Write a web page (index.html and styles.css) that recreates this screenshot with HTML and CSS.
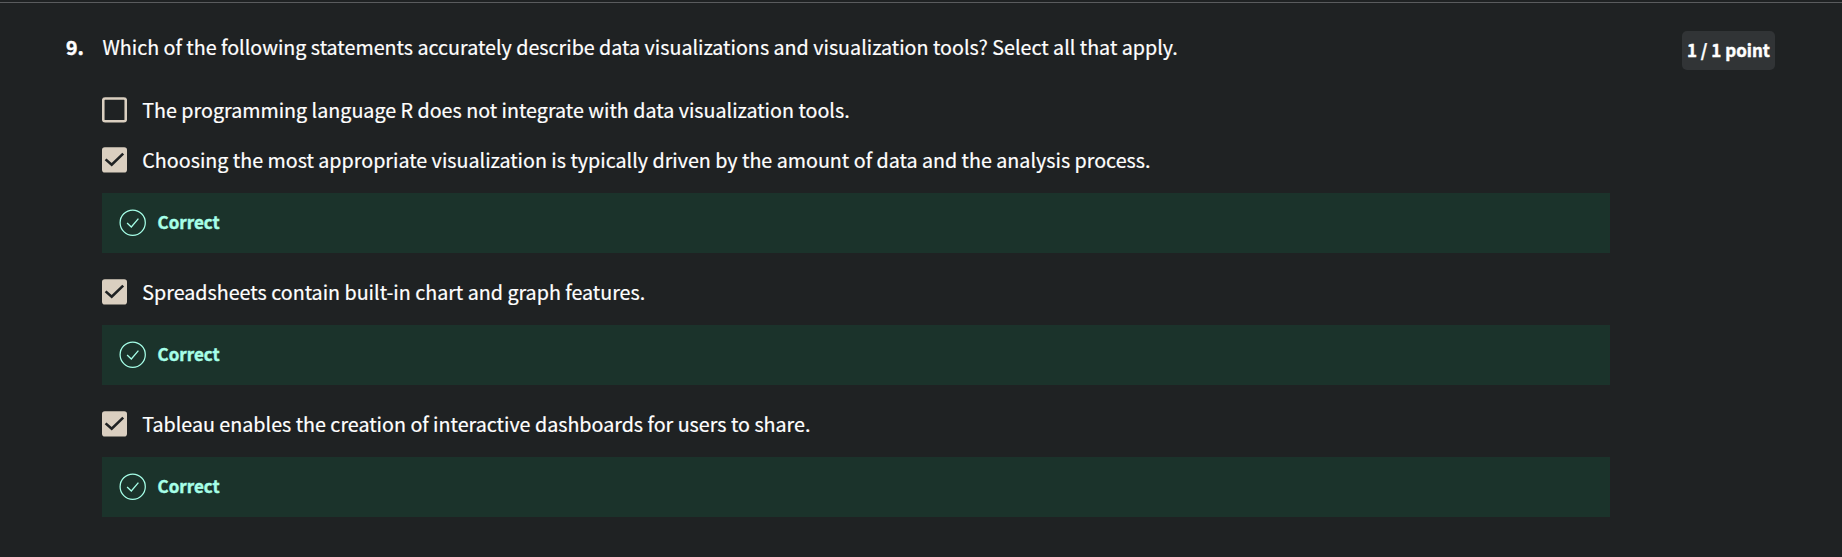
FILE: index.html
```html
<!DOCTYPE html>
<html lang="en">
<head>
<meta charset="utf-8">
<title>Quiz question</title>
<link rel="stylesheet" href="styles.css">
</head>
<body>
<svg class="defs" aria-hidden="true">
  <symbol id="box-empty" viewBox="0 0 25 26"><rect x="1.25" y="1.55" width="22.5" height="22.7" rx="1.8" fill="none" stroke="#dacfc0" stroke-width="2.6"/></symbol>
  <symbol id="box-check" viewBox="0 0 25 26"><rect y="0.3" width="25" height="25.2" rx="2.8" fill="#dacfc0"/><path d="M3.6 12.4 9.7 17.8 21.2 6.6" fill="none" stroke="#1f2223" stroke-width="2.6"/></symbol>
  <symbol id="circle-check" viewBox="0 0 28 28"><circle cx="13.7" cy="13.7" r="12.6" fill="none" stroke="#a6ffe8" stroke-width="1.25"/><path d="M8.1 14 12.3 18 19.4 9.6" fill="none" stroke="#a6ffe8" stroke-width="1.3"/></symbol>
</svg>
<main class="question">
  <div class="number">9.</div>
  <div class="content">
    <p class="prompt">Which of the following statements accurately describe data visualizations and visualization tools? Select all that apply.</p>
    <div class="option"><svg class="box"><use href="#box-empty"/></svg><span>The programming language R does not integrate with data visualization tools.</span></div>
    <div class="option"><svg class="box"><use href="#box-check"/></svg><span>Choosing the most appropriate visualization is typically driven by the amount of data and the analysis process.</span></div>
    <div class="feedback"><svg><use href="#circle-check"/></svg><span class="correct">Correct</span></div>
    <div class="option"><svg class="box"><use href="#box-check"/></svg><span>Spreadsheets contain built-in chart and graph features.</span></div>
    <div class="feedback"><svg><use href="#circle-check"/></svg><span class="correct">Correct</span></div>
    <div class="option"><svg class="box"><use href="#box-check"/></svg><span>Tableau enables the creation of interactive dashboards for users to share.</span></div>
    <div class="feedback"><svg><use href="#circle-check"/></svg><span class="correct">Correct</span></div>
  </div>
  <div class="points">1 / 1 point</div>
</main>
</body>
</html>
```
FILE: styles.css
```css
* { box-sizing: border-box; }
body {
  margin: 0;
  padding-top: 2px;
  background: #1f2223;
  color: #fff;
  font-family: "Noto Sans CJK JP", "Noto Sans", sans-serif;
  font-size: 19.7px;
  line-height: 28px;
  -webkit-text-stroke: 0.2px;
  overflow: hidden;
}
.defs { position: absolute; width: 0; height: 0; }
.question {
  display: flex;
  align-items: flex-start;
  height: 555px;
  border-top: 1px solid #5a5c5e;
  padding: 28px 67px 0 66px;
}
.number { width: 36px; padding-top: 2px; font-size: 19.5px; font-weight: 700; -webkit-text-stroke: 0.4px; }
.content { width: 1508px; }
.prompt { margin: 0; padding: 2px 0 0 0.5px; height: 54px; white-space: nowrap; }
.option { display: flex; align-items: center; height: 50px; gap: 15.3px; white-space: nowrap; }
.box { width: 25px; height: 26px; }
.feedback {
  display: flex;
  align-items: center;
  gap: 10.5px;
  height: 60px;
  margin: 8px 0 14px;
  padding-left: 17px;
  background: #1b332b;
}
.feedback svg { width: 28px; height: 28px; }
.correct {
  padding-bottom: 2px;
  color: #a6ffe8;
  font-size: 17px;
  font-weight: 700;
  -webkit-text-stroke: 0.4px;
}
.points {
  margin: 0 0 0 auto;
  width: 93px;
  height: 39px;
  border-radius: 5px;
  background: #313436;
  font-size: 17px;
  font-weight: 700;
  line-height: 38px;
  text-align: center;
  white-space: nowrap;
  -webkit-text-stroke: 0.4px;
}
```
